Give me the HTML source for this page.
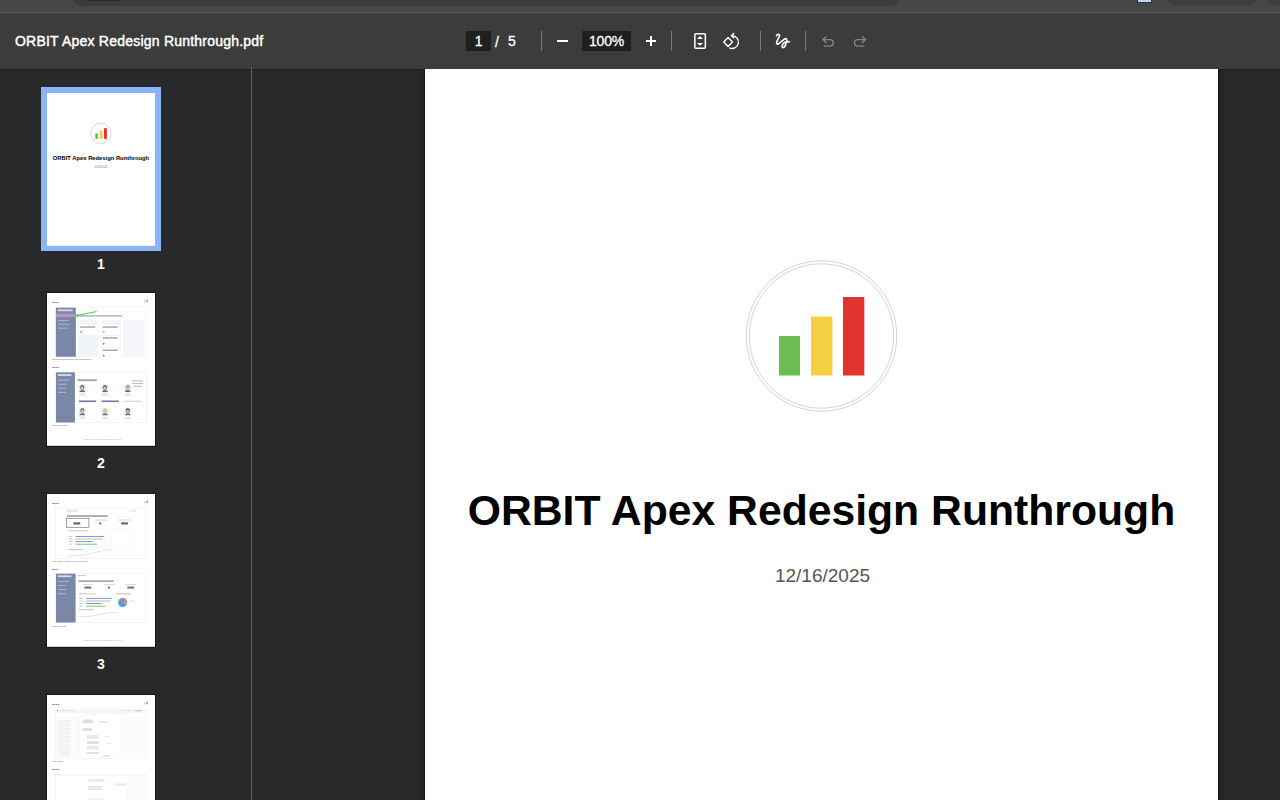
<!DOCTYPE html>
<html><head><meta charset="utf-8">
<style>
*{margin:0;padding:0;box-sizing:border-box}
html,body{width:1280px;height:800px;overflow:hidden;background:#282828;font-family:"Liberation Sans",sans-serif;position:relative}
.abs{position:absolute}
#chrome{left:0;top:0;width:1280px;height:13px;background:#474747}
#chromeline{left:0;top:12px;width:1280px;height:1px;background:#5a5a5a}
#toolbar{left:0;top:13px;width:1280px;height:56px;background:#3c3c3c}
#title{left:15px;top:33px;color:#fff;font-size:14px;white-space:nowrap;letter-spacing:0.22px;-webkit-text-stroke:0.45px #fff}
#sidebar{left:0;top:69px;width:251px;height:731px;background:#28292b}
#divider{left:251px;top:67px;width:1px;height:733px;background:#606060}
#page{left:425px;top:69px;width:793px;height:731px;background:#fff}
.tbt{color:#fff;font-size:14px;line-height:20px;white-space:nowrap;-webkit-text-stroke:0.3px #fff;letter-spacing:-0.2px}
.sep{top:31px;width:1px;height:20px;background:#7a7a7a}
#doctitle{left:425px;top:486px;width:793px;text-align:center;font-size:42.7px;font-weight:bold;color:#000;white-space:nowrap}
#docdate{left:426px;top:565px;width:793px;text-align:center;font-size:19px;color:#555}
.tp{position:absolute;width:793px;height:1122px;background:#fff;transform:scale(0.13619);transform-origin:0 0;overflow:hidden}
.tp .a{position:absolute}
.step{font-size:17px;color:#333;font-weight:bold}
.cap{font-size:14px;color:#555}
.shot{border:2px solid #d8d8d8;background:#fff;overflow:hidden}
.sb{background:#7b87a7}

.lbl{color:#fff;font-size:14px;font-weight:bold;width:40px;text-align:center}
</style></head><body>
<div class="abs" id="chrome"></div>
<div class="abs" style="left:72px;top:-8px;width:828px;height:14px;border-radius:0 0 10px 10px;background:#3b3b3b"></div>
<div class="abs" style="left:86px;top:0;width:34px;height:1px;background:#2a2a2a"></div>
<div class="abs" style="left:1137px;top:0;width:15px;height:3px;background:#bcd3fb;border:1px solid #333;border-top:0"></div>
<div class="abs" style="left:1168px;top:-8px;width:88px;height:13px;border-radius:0 0 8px 8px;background:#3d3d3d"></div>
<div class="abs" style="left:1266px;top:-8px;width:30px;height:13px;border-radius:0 0 8px 8px;background:#3d3d3d"></div>
<div class="abs" id="chromeline"></div>
<div class="abs" id="toolbar"></div>
<div class="abs" id="title">ORBIT Apex Redesign Runthrough.pdf</div>
<div class="abs" style="left:466px;top:31px;width:25px;height:20px;background:#1f1f1f;border-radius:1px"></div>
<div class="abs tbt" style="left:466px;top:31px;width:25px;text-align:center">1</div>
<div class="abs tbt" style="left:495px;top:32px">/</div>
<div class="abs tbt" style="left:508px;top:31px">5</div>
<div class="abs sep" style="left:541px"></div>
<div class="abs" style="left:582px;top:31px;width:49px;height:20px;background:#1f1f1f;border-radius:1px"></div>
<div class="abs tbt" style="left:582px;top:31px;width:49px;text-align:center">100%</div>
<div class="abs sep" style="left:671px"></div>
<div class="abs sep" style="left:760px"></div>
<div class="abs sep" style="left:805px"></div>
<svg class="abs" style="left:0;top:0" width="1280" height="69" viewBox="0 0 1280 69">
<g fill="none" stroke="#fff" stroke-width="1.7">
<path d="M557,41H568" stroke-width="2"/>
<path d="M646,41H656M651,36V46" stroke-width="2"/>
<rect x="694.85" y="33.8" width="10.5" height="14.4" rx="0.9" stroke-width="1.5"/>
</g>
<g fill="#fff"><path d="M700,36L703,39H697Z"/><path d="M700,45.8L703,43H697Z"/></g>
<g fill="none" stroke="#fff" stroke-width="1.5" stroke-linecap="round" stroke-linejoin="round">
<path d="M728.1,37.6L732.5,42L728.1,46.4L723.7,42Z" stroke-width="1.4"/>
<path d="M732.2,35.7A6.4,6.4 0 1 1 729.8,48.1" stroke-width="1.4"/>
<path d="M733.6,33.6L731.4,35.7L733.6,37.7" stroke-width="1.4"/>
<path d="M776.5,35.7C777.1,34.1 779.5,33.7 779.6,35.5L776.7,42C776.1,43.6 777.3,44.7 778.7,43.7L784.4,39.1C786.3,37.8 787.5,39.6 786.6,41.9L785.2,45.6C784.4,47.6 782.6,48.4 782.1,46.8C781.7,45.2 783.4,42.3 786.2,41.9L789.5,41.7" stroke-width="1.6"/>
</g>
<g fill="none" stroke="#858585" stroke-width="1.4" stroke-linecap="round" stroke-linejoin="round">
<path d="M826.1,36.7L822.9,39.6L826.1,42.5M823.2,39.6H830A3.25,3.25 0 0 1 830,46.1H824.3"/>
<path d="M862.4,36.7L865.6,39.6L862.4,42.5M865.3,39.6H857.7A3.25,3.25 0 0 0 857.7,46.1H864"/>
</g>
</svg>
<div class="abs" id="sidebar"></div>
<div class="abs" id="divider"></div>
<div class="abs" style="left:414px;top:69px;width:10px;height:731px;background:linear-gradient(to right,rgba(0,0,0,0),rgba(0,0,0,.12))"></div>
<div class="abs" style="left:1219px;top:69px;width:10px;height:731px;background:linear-gradient(to left,rgba(0,0,0,0),rgba(0,0,0,.12))"></div>
<div class="abs" style="left:424px;top:69px;width:795px;height:731px;background:#1b1b1b"></div>
<div class="abs" id="page"></div>
<div class="abs" style="left:0;top:69px;width:424px;height:1px;background:rgba(0,0,0,0.15)"></div>
<div class="abs" style="left:1219px;top:69px;width:61px;height:1px;background:rgba(0,0,0,0.15)"></div>
<svg class="abs" style="left:0;top:0" width="1280" height="800" viewBox="0 0 1280 800">
<circle cx="821.5" cy="336" r="75.2" fill="none" stroke="#d4d4d4" stroke-width="1"/>
<circle cx="821.5" cy="336" r="72.2" fill="none" stroke="#d4d4d4" stroke-width="1"/>
<rect x="779" y="336" width="21" height="39.5" fill="#6abd50"/>
<rect x="811" y="316.5" width="21.4" height="59" fill="#f5d142"/>
<rect x="843" y="297" width="21.3" height="78.5" fill="#e2332e"/>
</svg>
<div class="abs" id="doctitle">ORBIT Apex Redesign Runthrough</div>
<div class="abs" id="docdate">12/16/2025</div>
<div class="abs" style="left:41px;top:87px;width:120px;height:164px;background:#8ab4f8"></div>
<div class="tp" style="left:47px;top:93px">
<svg class="a" style="left:317px;top:217px" width="160" height="160" viewBox="-80 -80 160 160">
<circle r="75.2" fill="none" stroke="#cfcfcf" stroke-width="6"/>
<circle r="72.2" fill="none" stroke="#cfcfcf" stroke-width="0"/>
<rect x="-42.5" y="0" width="21" height="39.5" fill="#6abd50"/>
<rect x="-10.5" y="-19.5" width="21.4" height="59" fill="#f5d142"/>
<rect x="21.5" y="-39" width="21.3" height="78.5" fill="#e2332e"/>
</svg>
<div class="a" style="left:0;top:453px;width:793px;text-align:center;font-size:42.7px;font-weight:bold;color:#000;white-space:nowrap">ORBIT Apex Redesign Runthrough</div>
<div class="a" style="left:0;top:531px;width:793px;text-align:center;font-size:19px;color:#777">12/16/2025</div>
</div>
<div class="abs lbl" style="left:81px;top:256px">1</div>
<div class="abs" style="left:46px;top:292px;width:110px;height:155px;background:#161616"></div>
<div class="tp" style="left:47px;top:293px">
<div class="a step" style="left:37px;top:58px">Step 1</div>
<svg class="a" style="left:706px;top:36px" width="42" height="42" viewBox="-80 -80 160 160">
<circle r="74" fill="#fff" stroke="#e2e2e2" stroke-width="4"/>
<rect x="-42.5" y="0" width="21" height="39.5" fill="#6abd50"/>
<rect x="-10.5" y="-19.5" width="21.4" height="59" fill="#f5d142"/>
<rect x="21.5" y="-39" width="21.3" height="78.5" fill="#e2332e"/>
</svg>
<div class="a shot" style="left:62px;top:104px;width:665px;height:366px">
 <div class="a sb" style="left:0;top:0;width:148px;height:366px"></div>
 <div class="a" style="left:14px;top:14px;width:110px;height:14px;background:#e9ecf3;opacity:.8"></div>
 <div class="a" style="left:0;top:42px;width:148px;height:34px;background:#9aa5c2;border-top:5px solid #d64f9a;border-bottom:5px solid #d64f9a"></div>
 <div class="a" style="left:16px;top:92px;width:80px;height:8px;background:#aab3cc"></div>
 <div class="a" style="left:16px;top:120px;width:90px;height:8px;background:#aab3cc"></div>
 <div class="a" style="left:16px;top:148px;width:70px;height:8px;background:#aab3cc"></div>
 <div class="a" style="left:148px;top:0;width:517px;height:32px;background:#fff;border-bottom:1px solid #e6e6e6"></div>
 <div class="a" style="left:168px;top:57px;width:320px;height:10px;background:#777;opacity:.6"></div>
 <div class="a" style="left:165px;top:90px;width:150px;height:276px;background:#f2f5f8"></div>
 <div class="a" style="left:330px;top:90px;width:150px;height:276px;background:#f3f5f8"></div>
 <div class="a" style="left:495px;top:90px;width:150px;height:276px;background:#f4f6f9"></div>
 <div class="a" style="left:172px;top:130px;width:136px;height:70px;background:#fff"></div>
 <div class="a" style="left:337px;top:130px;width:136px;height:70px;background:#fff"></div>
 <div class="a" style="left:337px;top:210px;width:136px;height:80px;background:#fff"></div>
 <div class="a" style="left:337px;top:300px;width:136px;height:66px;background:#fff"></div>
 <div class="a" style="left:180px;top:140px;width:110px;height:8px;background:#888"></div>
 <div class="a" style="left:345px;top:140px;width:110px;height:8px;background:#888"></div>
 <div class="a" style="left:345px;top:220px;width:110px;height:8px;background:#888"></div>
 <div class="a" style="left:345px;top:310px;width:110px;height:8px;background:#888"></div>
 <div class="a" style="left:180px;top:172px;width:14px;height:14px;border-radius:50%;background:#c77"></div>
 <div class="a" style="left:345px;top:172px;width:14px;height:14px;border-radius:50%;background:#db5"></div>
 <div class="a" style="left:345px;top:260px;width:14px;height:14px;border-radius:50%;background:#888"></div>
 <div class="a" style="left:345px;top:348px;width:14px;height:14px;border-radius:50%;background:#888"></div>
 <svg class="a" style="left:0;top:0" width="665" height="366"><path d="M150,60 L300,30" stroke="#4cd964" stroke-width="9"/><path d="M140,62 L168,44 L166,72Z" fill="#4cd964"/></svg>
</div>
<div class="a cap" style="left:37px;top:482px">Click 'Opportunities' in the left navigation menu</div>
<div class="a step" style="left:37px;top:538px">Step 2</div>
<div class="a shot" style="left:63px;top:579px;width:668px;height:373px">
 <div class="a sb" style="left:0;top:0;width:140px;height:373px"></div>
 <div class="a" style="left:14px;top:14px;width:100px;height:14px;background:#e9ecf3;opacity:.8"></div>
 <div class="a" style="left:16px;top:55px;width:80px;height:8px;background:#aab3cc"></div>
 <div class="a" style="left:16px;top:85px;width:60px;height:8px;background:#aab3cc"></div>
 <div class="a" style="left:16px;top:115px;width:60px;height:8px;background:#aab3cc"></div>
 <div class="a" style="left:16px;top:145px;width:60px;height:8px;background:#aab3cc"></div>
 <div class="a" style="left:160px;top:52px;width:140px;height:14px;background:#666;opacity:.6"></div>
 <div class="a" style="left:560px;top:60px;width:80px;height:8px;background:#bbb"></div>
 <div class="a" style="left:560px;top:80px;width:80px;height:8px;background:#bbb"></div>
 <div class="a" style="left:570px;top:100px;width:60px;height:8px;background:#bbb"></div>
<div class="a" style="left:174px;top:157px;width:40px;height:5px;background:#c8c8c8"></div>
<div class="a" style="left:166px;top:169px;width:56px;height:5px;background:#d8d8d8"></div>
<div class="a" style="left:174px;top:328px;width:40px;height:5px;background:#c8c8c8"></div>
<div class="a" style="left:166px;top:340px;width:56px;height:5px;background:#d8d8d8"></div>
<div class="a" style="left:341px;top:157px;width:40px;height:5px;background:#c8c8c8"></div>
<div class="a" style="left:333px;top:169px;width:56px;height:5px;background:#d8d8d8"></div>
<div class="a" style="left:341px;top:328px;width:40px;height:5px;background:#c8c8c8"></div>
<div class="a" style="left:333px;top:340px;width:56px;height:5px;background:#d8d8d8"></div>
<div class="a" style="left:508px;top:157px;width:40px;height:5px;background:#c8c8c8"></div>
<div class="a" style="left:500px;top:169px;width:56px;height:5px;background:#d8d8d8"></div>
<div class="a" style="left:508px;top:328px;width:40px;height:5px;background:#c8c8c8"></div>
<div class="a" style="left:500px;top:340px;width:56px;height:5px;background:#d8d8d8"></div>
 <div class="a" style="left:170px;top:208px;width:126px;height:12px;background:#6f7ca0"></div>
 <div class="a" style="left:336px;top:208px;width:126px;height:12px;background:#6f7ca0"></div>
 <div class="a" style="left:500px;top:210px;width:126px;height:8px;background:#e8c8c8"></div>
<svg class="a" style="left:164px;top:87px" width="60" height="60" viewBox="0 0 52 52">
<circle cx="26" cy="26" r="25" fill="#eef3f3" stroke="#cfe6e3" stroke-width="2"/>
<ellipse cx="26" cy="22" rx="13" ry="15" fill="#6b4a34"/>
<ellipse cx="26" cy="26" rx="9" ry="11" fill="#e6c3a5"/>
<path d="M8,46 Q26,30 44,46 L44,52 L8,52Z" fill="#6a7080"/>
</svg><svg class="a" style="left:331px;top:87px" width="60" height="60" viewBox="0 0 52 52">
<circle cx="26" cy="26" r="25" fill="#eef3f3" stroke="#cfe6e3" stroke-width="2"/>
<ellipse cx="26" cy="22" rx="13" ry="15" fill="#555"/>
<ellipse cx="26" cy="26" rx="9" ry="11" fill="#d9b79a"/>
<path d="M8,46 Q26,30 44,46 L44,52 L8,52Z" fill="#6a7080"/>
</svg><svg class="a" style="left:498px;top:87px" width="60" height="60" viewBox="0 0 52 52">
<circle cx="26" cy="26" r="25" fill="#eef3f3" stroke="#cfe6e3" stroke-width="2"/>
<ellipse cx="26" cy="22" rx="13" ry="15" fill="#b08a5a"/>
<ellipse cx="26" cy="26" rx="9" ry="11" fill="#e8c09a"/>
<path d="M8,46 Q26,30 44,46 L44,52 L8,52Z" fill="#6a7080"/>
</svg><svg class="a" style="left:164px;top:258px" width="60" height="60" viewBox="0 0 52 52">
<circle cx="26" cy="26" r="25" fill="#eef3f3" stroke="#cfe6e3" stroke-width="2"/>
<ellipse cx="26" cy="22" rx="13" ry="15" fill="#6e5a4a"/>
<ellipse cx="26" cy="26" rx="9" ry="11" fill="#e4c4a6"/>
<path d="M8,46 Q26,30 44,46 L44,52 L8,52Z" fill="#6a7080"/>
</svg><svg class="a" style="left:331px;top:258px" width="60" height="60" viewBox="0 0 52 52">
<circle cx="26" cy="26" r="25" fill="#eef3f3" stroke="#cfe6e3" stroke-width="2"/>
<ellipse cx="26" cy="22" rx="13" ry="15" fill="#e6c050"/>
<ellipse cx="26" cy="26" rx="9" ry="11" fill="#e8c29a"/>
<path d="M8,46 Q26,30 44,46 L44,52 L8,52Z" fill="#6a7080"/>
</svg><svg class="a" style="left:498px;top:258px" width="60" height="60" viewBox="0 0 52 52">
<circle cx="26" cy="26" r="25" fill="#eef3f3" stroke="#cfe6e3" stroke-width="2"/>
<ellipse cx="26" cy="22" rx="13" ry="15" fill="#4a3a30"/>
<ellipse cx="26" cy="26" rx="9" ry="11" fill="#e2c0a2"/>
<path d="M8,46 Q26,30 44,46 L44,52 L8,52Z" fill="#6a7080"/>
</svg>
</div>
<div class="a cap" style="left:37px;top:963px">Select Opportunity</div>
<div class="a cap" style="left:270px;top:1066px;color:#aaa">ORBIT Apex Redesign Runthrough - Page 2</div>
</div>
<div class="abs lbl" style="left:81px;top:455px">2</div>
<div class="abs" style="left:46px;top:493px;width:110px;height:155px;background:#161616"></div>
<div class="tp" style="left:47px;top:494px">
<div class="a step" style="left:37px;top:60px">Step 3</div>
<svg class="a" style="left:706px;top:36px" width="42" height="42" viewBox="-80 -80 160 160">
<circle r="74" fill="#fff" stroke="#e2e2e2" stroke-width="4"/>
<rect x="-42.5" y="0" width="21" height="39.5" fill="#6abd50"/>
<rect x="-10.5" y="-19.5" width="21.4" height="59" fill="#f5d142"/>
<rect x="21.5" y="-39" width="21.3" height="78.5" fill="#e2332e"/>
</svg>
<div class="a shot" style="left:62px;top:106px;width:665px;height:366px">
 <div class="a" style="left:80px;top:12px;width:80px;height:8px;background:#ccc"></div>
 <div class="a" style="left:540px;top:12px;width:50px;height:8px;background:#ddd"></div>
 <div class="a" style="left:82px;top:48px;width:300px;height:12px;background:#777;opacity:.7"></div>
 <div class="a" style="left:78px;top:68px;width:168px;height:70px;border:4px solid #555"></div>
 <div class="a" style="left:130px;top:100px;width:50px;height:16px;background:#666"></div>
 <div class="a" style="left:320px;top:100px;width:14px;height:16px;background:#666"></div>
 <div class="a" style="left:480px;top:100px;width:50px;height:16px;background:#666"></div>
 <div class="a" style="left:290px;top:80px;width:90px;height:6px;background:#ccc"></div>
 <div class="a" style="left:460px;top:80px;width:90px;height:6px;background:#ccc"></div>
 <div class="a" style="left:76px;top:150px;width:285px;height:126px;border:2px solid #eee"></div>
 <div class="a" style="left:90px;top:158px;width:150px;height:8px;background:#ccc"></div>
<div class="a" style="left:146px;top:200px;width:210px;height:7px;background:#5b9ae6"></div>
<div class="a" style="left:96px;top:200px;width:24px;height:6px;background:#bbb"></div>
<div class="a" style="left:146px;top:219px;width:199px;height:7px;background:#f4a876"></div>
<div class="a" style="left:96px;top:219px;width:24px;height:6px;background:#bbb"></div>
<div class="a" style="left:146px;top:238px;width:126px;height:7px;background:#5b9ae6"></div>
<div class="a" style="left:96px;top:238px;width:24px;height:6px;background:#bbb"></div>
<div class="a" style="left:146px;top:257px;width:157px;height:7px;background:#72c472"></div>
<div class="a" style="left:96px;top:257px;width:24px;height:6px;background:#bbb"></div>

 <div class="a" style="left:400px;top:150px;width:175px;height:120px;border:2px solid #e4e4e4"></div>
 <div class="a" style="left:76px;top:284px;width:500px;height:80px;border:2px solid #eee"></div>
 <div class="a" style="left:90px;top:296px;width:110px;height:8px;background:#ccc"></div>
 <svg class="a" style="left:0;top:0" width="665" height="366"><path d="M90,350 Q200,345 300,320 T420,300" stroke="#bbb" stroke-width="3" fill="none"/></svg>
</div>
<div class="a cap" style="left:37px;top:484px">Click 'Complete' at the top of the bar chart</div>
<div class="a step" style="left:37px;top:540px">Step 4</div>
<div class="a shot" style="left:63px;top:581px;width:663px;height:364px">
 <div class="a sb" style="left:0;top:0;width:145px;height:364px"></div>
 <div class="a" style="left:14px;top:14px;width:100px;height:14px;background:#e9ecf3;opacity:.8"></div>
 <div class="a" style="left:16px;top:55px;width:80px;height:8px;background:#aab3cc"></div>
 <div class="a" style="left:16px;top:85px;width:60px;height:8px;background:#aab3cc"></div>
 <div class="a" style="left:16px;top:115px;width:60px;height:8px;background:#aab3cc"></div>
 <div class="a" style="left:16px;top:145px;width:60px;height:8px;background:#aab3cc"></div>
 <div class="a" style="left:160px;top:12px;width:60px;height:8px;background:#ccc"></div>
 <div class="a" style="left:165px;top:50px;width:260px;height:14px;background:#777;opacity:.6"></div>
 <div class="a" style="left:210px;top:96px;width:50px;height:16px;background:#777"></div>
 <div class="a" style="left:383px;top:96px;width:14px;height:16px;background:#777"></div>
 <div class="a" style="left:525px;top:96px;width:50px;height:16px;background:#777"></div>
 <div class="a" style="left:200px;top:80px;width:70px;height:6px;background:#ccc"></div>
 <div class="a" style="left:355px;top:80px;width:80px;height:6px;background:#ccc"></div>
 <div class="a" style="left:510px;top:80px;width:80px;height:6px;background:#ccc"></div>
 <div class="a" style="left:170px;top:146px;width:120px;height:8px;background:#ccc"></div>
<div class="a" style="left:222px;top:180px;width:190px;height:7px;background:#5b9ae6"></div>
<div class="a" style="left:172px;top:180px;width:24px;height:6px;background:#bbb"></div>
<div class="a" style="left:222px;top:199px;width:180px;height:7px;background:#f4a876"></div>
<div class="a" style="left:172px;top:199px;width:24px;height:6px;background:#bbb"></div>
<div class="a" style="left:222px;top:218px;width:114px;height:7px;background:#5b9ae6"></div>
<div class="a" style="left:172px;top:218px;width:24px;height:6px;background:#bbb"></div>
<div class="a" style="left:222px;top:237px;width:142px;height:7px;background:#72c472"></div>
<div class="a" style="left:172px;top:237px;width:24px;height:6px;background:#bbb"></div>

 <div class="a" style="left:440px;top:146px;width:110px;height:8px;background:#e2b8b0"></div>
 <svg class="a" style="left:0;top:0" width="663" height="364">
  <circle cx="490" cy="214" r="33" fill="#5b9ae6"/>
  <path d="M490,214 L490,181 A33,33 0 0 1 522,206Z" fill="#ef6f6a"/>
  <path d="M490,214 L522,206 A33,33 0 0 1 518,231Z" fill="#7fc98a"/>
  <path d="M165,320 Q250,320 330,300 T450,290" stroke="#bbb" stroke-width="3" fill="none"/>
 </svg>
 <div class="a" style="left:540px;top:200px;width:40px;height:6px;background:#ddd"></div>
 <div class="a" style="left:170px;top:262px;width:110px;height:8px;background:#ccc"></div>
</div>
<div class="a cap" style="left:37px;top:962px">Select Analytics</div>
<div class="a cap" style="left:270px;top:1064px;color:#aaa">ORBIT Apex Redesign Runthrough - Page 3</div>
</div>
<div class="abs lbl" style="left:81px;top:656px">3</div>
<div class="abs" style="left:46px;top:694px;width:110px;height:155px;background:#161616"></div>
<div class="tp" style="left:47px;top:695px">
<div class="a step" style="left:37px;top:58px">Step 5</div>
<svg class="a" style="left:706px;top:36px" width="42" height="42" viewBox="-80 -80 160 160">
<circle r="74" fill="#fff" stroke="#e2e2e2" stroke-width="4"/>
<rect x="-42.5" y="0" width="21" height="39.5" fill="#6abd50"/>
<rect x="-10.5" y="-19.5" width="21.4" height="59" fill="#f5d142"/>
<rect x="21.5" y="-39" width="21.3" height="78.5" fill="#e2332e"/>
</svg>
<div class="a shot" style="left:61px;top:102px;width:667px;height:367px">
 <div class="a" style="left:0;top:0;width:667px;height:24px;background:#f6f7f9;border-bottom:2px solid #e6e8eb"></div>
 <div class="a" style="left:10px;top:7px;width:9px;height:9px;background:#6b9be6;border-radius:2px"></div>
 <div class="a" style="left:30px;top:9px;width:110px;height:4px;background:#d4d4d4"></div>
 <div class="a" style="left:480px;top:9px;width:80px;height:4px;background:#d4d4d4"></div>
 <div class="a" style="left:585px;top:6px;width:50px;height:10px;background:#b3cdf3"></div>
 <div class="a" style="left:220px;top:34px;width:320px;height:3px;background:#cfdcf0"></div>
 <div class="a" style="left:0;top:48px;width:175px;height:319px;background:#fbfbfc;border-right:2px solid #f0f0f0"></div>
<div class="a" style="left:22px;top:80px;width:85px;height:3px;background:#d8d8d8"></div>
<div class="a" style="left:22px;top:95px;width:85px;height:3px;background:#d8d8d8"></div>
<div class="a" style="left:22px;top:110px;width:85px;height:3px;background:#d8d8d8"></div>
<div class="a" style="left:22px;top:125px;width:85px;height:3px;background:#d8d8d8"></div>
<div class="a" style="left:22px;top:140px;width:85px;height:3px;background:#d8d8d8"></div>
<div class="a" style="left:22px;top:155px;width:85px;height:3px;background:#d8d8d8"></div>
<div class="a" style="left:22px;top:170px;width:85px;height:3px;background:#d8d8d8"></div>
<div class="a" style="left:22px;top:185px;width:85px;height:3px;background:#d8d8d8"></div>
<div class="a" style="left:22px;top:200px;width:85px;height:3px;background:#d8d8d8"></div>
<div class="a" style="left:22px;top:215px;width:85px;height:3px;background:#d8d8d8"></div>
<div class="a" style="left:22px;top:230px;width:85px;height:3px;background:#d8d8d8"></div>
<div class="a" style="left:22px;top:245px;width:85px;height:3px;background:#d8d8d8"></div>
<div class="a" style="left:22px;top:260px;width:85px;height:3px;background:#d8d8d8"></div>
<div class="a" style="left:22px;top:275px;width:85px;height:3px;background:#d8d8d8"></div>
<div class="a" style="left:22px;top:290px;width:85px;height:3px;background:#d8d8d8"></div>
<div class="a" style="left:22px;top:305px;width:85px;height:3px;background:#d8d8d8"></div>
<div class="a" style="left:22px;top:320px;width:85px;height:3px;background:#d8d8d8"></div>
<div class="a" style="left:22px;top:335px;width:85px;height:3px;background:#d8d8d8"></div>
<div class="a" style="left:200px;top:78px;width:75px;height:3px;background:#b4b4b4"></div>
<div class="a" style="left:200px;top:85px;width:75px;height:3px;background:#b4b4b4"></div>
<div class="a" style="left:200px;top:92px;width:75px;height:3px;background:#b4b4b4"></div>
<div class="a" style="left:200px;top:99px;width:75px;height:3px;background:#b4b4b4"></div>
<div class="a" style="left:320px;top:90px;width:60px;height:3px;background:#c0c0c0"></div>
<div class="a" style="left:320px;top:97px;width:60px;height:3px;background:#c0c0c0"></div>
<div class="a" style="left:200px;top:140px;width:65px;height:3px;background:#b4b4b4"></div>
<div class="a" style="left:200px;top:147px;width:65px;height:3px;background:#b4b4b4"></div>
<div class="a" style="left:200px;top:154px;width:65px;height:3px;background:#b4b4b4"></div>
<div class="a" style="left:230px;top:195px;width:85px;height:3px;background:#b8b8b8"></div>
<div class="a" style="left:230px;top:203px;width:85px;height:3px;background:#b8b8b8"></div>
<div class="a" style="left:230px;top:211px;width:85px;height:3px;background:#b8b8b8"></div>
<div class="a" style="left:230px;top:235px;width:85px;height:3px;background:#b8b8b8"></div>
<div class="a" style="left:230px;top:243px;width:85px;height:3px;background:#b8b8b8"></div>
<div class="a" style="left:230px;top:251px;width:85px;height:3px;background:#b8b8b8"></div>
<div class="a" style="left:230px;top:275px;width:85px;height:3px;background:#b8b8b8"></div>
<div class="a" style="left:230px;top:283px;width:85px;height:3px;background:#b8b8b8"></div>
<div class="a" style="left:230px;top:291px;width:85px;height:3px;background:#b8b8b8"></div>
<div class="a" style="left:230px;top:315px;width:85px;height:3px;background:#b8b8b8"></div>
<div class="a" style="left:230px;top:323px;width:85px;height:3px;background:#b8b8b8"></div>
<div class="a" style="left:360px;top:200px;width:40px;height:3px;background:#c4c4c4"></div>
<div class="a" style="left:370px;top:250px;width:40px;height:3px;background:#c4c4c4"></div>
<div class="a" style="left:350px;top:340px;width:50px;height:3px;background:#c4c4c4"></div>
<div class="a" style="left:350px;top:348px;width:50px;height:3px;background:#c4c4c4"></div>

 <div class="a" style="left:470px;top:48px;width:197px;height:319px;background:#fafbfc"></div>
</div>
<div class="a cap" style="left:37px;top:476px">Click 'Details'</div>
<div class="a step" style="left:37px;top:538px">Step 6</div>
<div class="a shot" style="left:61px;top:580px;width:667px;height:367px">
 <div class="a" style="left:0;top:0;width:667px;height:12px;background:#f6f7f9"></div>
<div class="a" style="left:240px;top:40px;width:120px;height:3px;background:#b8b8b8"></div>
<div class="a" style="left:240px;top:48px;width:120px;height:3px;background:#b8b8b8"></div>
<div class="a" style="left:440px;top:70px;width:110px;height:3px;background:#c0c0c0"></div>
<div class="a" style="left:440px;top:78px;width:110px;height:3px;background:#c0c0c0"></div>
<div class="a" style="left:240px;top:90px;width:100px;height:3px;background:#b8b8b8"></div>
<div class="a" style="left:240px;top:99px;width:100px;height:3px;background:#b8b8b8"></div>
<div class="a" style="left:240px;top:108px;width:100px;height:3px;background:#b8b8b8"></div>
<div class="a" style="left:240px;top:180px;width:110px;height:3px;background:#b8b8b8"></div>
<div class="a" style="left:240px;top:189px;width:110px;height:3px;background:#b8b8b8"></div>
<div class="a" style="left:240px;top:198px;width:110px;height:3px;background:#b8b8b8"></div>

 <div class="a" style="left:520px;top:12px;width:147px;height:355px;background:#fafbfc"></div>
</div>
</div>
</body></html>
